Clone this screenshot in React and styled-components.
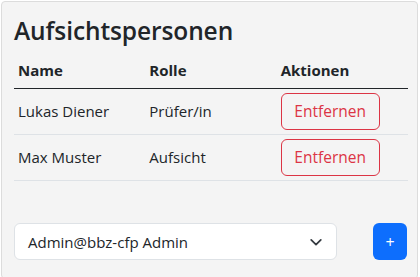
import React from 'react';
import styled, { createGlobalStyle } from 'styled-components';

const GlobalStyle = createGlobalStyle`
  body {
    margin: 0;
    background: #ffffff;
    font-family: "Open Sans", "Noto Sans", sans-serif;
    color: #212529;
  }
`;

const people = [
  { name: 'Lukas Diener', role: 'Prüfer/in' },
  { name: 'Max Muster', role: 'Aufsicht' },
];

function App() {
  return (
    <>
      <GlobalStyle />
      <Card>
        <Title>Aufsichtspersonen</Title>
        <Table>
          <thead>
            <tr>
              <Th>Name</Th>
              <Th>Rolle</Th>
              <Th>Aktionen</Th>
            </tr>
          </thead>
          <tbody>
            {people.map((p) => (
              <tr key={p.name}>
                <Td>{p.name}</Td>
                <Td>{p.role}</Td>
                <Td>
                  <RemoveButton>Entfernen</RemoveButton>
                </Td>
              </tr>
            ))}
          </tbody>
        </Table>
        <AddRow>
          <Select>
            <span>Admin@bbz-cfp Admin</span>
            <svg width="14" height="14" viewBox="0 0 16 16" fill="none">
              <path d="M2.5 5.5L8 11l5.5-5.5" stroke="#343a40" strokeWidth="2" strokeLinecap="round" strokeLinejoin="round" />
            </svg>
          </Select>
          <AddButton>+</AddButton>
        </AddRow>
      </Card>
    </>
  );
}

const Card = styled.div`
  margin: 1px 2px 0 1px;
  min-height: 278px;
  box-sizing: border-box;
  background: #f4f4f4;
  border: 1px solid #dcdcdc;
  border-radius: 4px;
  padding: 14px 10px 12px 12px;
`;

const Title = styled.h3`
  margin: 0 0 6px;
  font-size: 24.5px;
  line-height: 30px;
  font-weight: 600;
  letter-spacing: -0.1px;
`;

const Table = styled.table`
  width: 394px;
  table-layout: fixed;
  border-collapse: collapse;
  font-size: 15px;
`;

const Th = styled.th`
  text-align: left;
  font-weight: 700;
  padding: 6px 4px 6px;
  line-height: 24px;
  border-bottom: 1px solid #212529;
`;

const Td = styled.td`
  padding: 3px 4px 4px;
  height: 38px;
  line-height: 24px;
  border-bottom: 1px solid #dee2e6;
`;

const RemoveButton = styled.button`
  font-family: inherit;
  font-size: 15.5px;
  color: #dc3545;
  background: transparent;
  border: 1px solid #dc3545;
  border-radius: 6px;
  width: 99px;
  height: 37px;
  padding: 0;
`;

const AddRow = styled.div`
  display: flex;
  align-items: center;
  justify-content: space-between;
  margin-top: 42px;
  width: 393px;
`;

const Select = styled.div`
  display: flex;
  align-items: center;
  justify-content: space-between;
  box-sizing: border-box;
  width: 323px;
  height: 37px;
  padding: 0 13px 0 13px;
  background: #ffffff;
  border: 1px solid #dee2e6;
  border-radius: 6px;
  font-size: 15px;
`;

const AddButton = styled.button`
  width: 34px;
  height: 37px;
  border: none;
  border-radius: 6px;
  background: #0d6efd;
  color: #ffffff;
  font-family: inherit;
  font-size: 16px;
  padding: 0;
`;

export default App;
